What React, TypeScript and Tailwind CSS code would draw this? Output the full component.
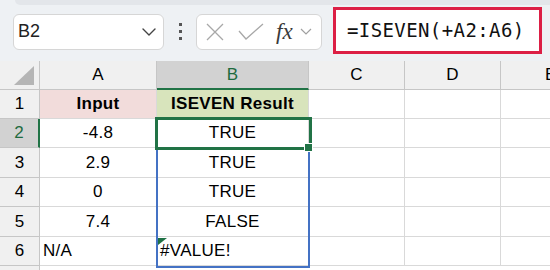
import type { ReactNode } from "react";

const cellFont = { fontFamily: '"Liberation Sans", Arial, sans-serif' };

type Row = { n: number; a: string; b: string; left?: boolean };

const rows: Row[] = [
  { n: 2, a: "-4.8", b: "TRUE" },
  { n: 3, a: "2.9", b: "TRUE" },
  { n: 4, a: "0", b: "TRUE" },
  { n: 5, a: "7.4", b: "FALSE" },
  { n: 6, a: "N/A", b: "#VALUE!", left: true },
];

const rowHeights = ["h-[29px]", "h-[30px]", "h-[29px]", "h-[30px]", "h-[29px]"];

function Cell({ children, className = "" }: { children?: ReactNode; className?: string }) {
  return (
    <div
      className={`flex items-center border-r border-b border-[#d9d9d9] text-[17px] tracking-[0.3px] text-black ${className}`}
    >
      {children}
    </div>
  );
}

function Chevron({ color }: { color: string }) {
  return (
    <svg width="14" height="8" viewBox="0 0 14 8" fill="none" aria-hidden>
      <path d="M1 1l6 6 6-6" stroke={color} strokeWidth="1.4" strokeLinecap="round" strokeLinejoin="round" />
    </svg>
  );
}

function FormulaBar() {
  return (
    <div className="relative flex h-[61px] items-center bg-[#eef1f4] pl-[13px]">
      <div className="absolute left-[15px] right-0 top-0 h-[5px] rounded-bl-[6px] bg-[#e3e6ea]" />
      <div className="mt-[2px] flex h-[36px] w-[151px] items-center justify-between rounded-[6px] border border-[#d6d6d6] bg-white pl-[4px] pr-[7px]">
        <span className="text-[18px] text-[#222]" style={cellFont}>
          B2
        </span>
        <Chevron color="#444" />
      </div>
      <div className="ml-[15px] mr-[14px] mt-[2px] flex flex-col gap-[4px]">
        <span className="size-[3px] bg-[#555]" />
        <span className="size-[3px] bg-[#555]" />
        <span className="size-[3px] bg-[#555]" />
      </div>
      <div className="mt-[2px] flex h-[36px] w-[126px] items-center rounded-[6px] border border-[#d6d6d6] bg-white pl-[9px]">
        <svg width="18" height="18" viewBox="0 0 18 18" fill="none" aria-hidden>
          <path d="M1 1l16 16M17 1L1 17" stroke="#a8a8a8" strokeWidth="1.3" />
        </svg>
        <svg width="26" height="17" viewBox="0 0 26 17" fill="none" aria-hidden className="ml-[14px]">
          <path d="M1 8l7 8L25 1" stroke="#a8a8a8" strokeWidth="1.3" />
        </svg>
        <span
          className="ml-[12px] text-[23px] italic leading-none text-[#3a3a3a]"
          style={{ fontFamily: '"Liberation Serif", "Times New Roman", serif' }}
        >
          fx
        </span>
        <span className="ml-[7px]">
          <svg width="12" height="7" viewBox="0 0 12 7" fill="none" aria-hidden>
            <path d="M1 1l5 5 5-5" stroke="#a0a0a0" strokeWidth="1.2" />
          </svg>
        </span>
      </div>
      <div className="ml-[11px] flex h-[47px] w-[209px] items-center border-[3px] border-[#dc1f45] bg-white pl-[11px]">
        <span
          className="text-[19px] tracking-[0.4px] text-[#111]"
          style={{ fontFamily: '"DejaVu Sans Mono", "Liberation Mono", monospace' }}
        >
          =ISEVEN(+A2:A6)
        </span>
      </div>
    </div>
  );
}

export default function App() {
  return (
    <div className="h-[270px] w-[550px] overflow-hidden bg-white" style={cellFont}>
      <FormulaBar />
      <div className="relative">
        <div className="grid grid-cols-[40px_117px_152px_96px_96px_1fr]">
          {/* column headers */}
          <div className="relative h-[29px] border-r border-b border-[#c6c6c6] bg-[#f0f0f0]">
            <svg width="20" height="19" viewBox="0 0 20 19" className="absolute bottom-[4px] right-[5px]" aria-hidden>
              <path d="M20 0v19H0z" fill="#b5b5b5" />
            </svg>
          </div>
          <div className="flex h-[29px] items-center justify-center border-r border-b border-[#c6c6c6] bg-[#f0f0f0] text-[17px]">
            A
          </div>
          <div className="flex h-[29px] items-center justify-center border-r border-b-[2px] border-r-[#c6c6c6] border-b-[#217346] bg-[#d2d2d2] text-[17px] text-[#1e6b3f]">
            B
          </div>
          <div className="flex h-[29px] items-center justify-center border-r border-b border-[#c6c6c6] bg-[#f0f0f0] text-[17px]">
            C
          </div>
          <div className="flex h-[29px] items-center justify-center border-r border-b border-[#c6c6c6] bg-[#f0f0f0] text-[17px]">
            D
          </div>
          <div className="flex h-[29px] items-center border-b border-[#c6c6c6] bg-[#f0f0f0] pl-[44px] text-[17px]">
            E
          </div>

          {/* row 1 */}
          <div className="flex h-[29px] items-center justify-center border-r border-b border-[#c6c6c6] bg-[#f0f0f0] text-[17px]">
            1
          </div>
          <Cell className="justify-center bg-[#f2dcdb] font-bold">Input</Cell>
          <Cell className="justify-center bg-[#d8e4bc] font-bold">ISEVEN Result</Cell>
          <Cell />
          <Cell />
          <Cell className="border-r-0" />

          {rows.map((r, i) => {
            const sel = r.n === 2;
            return (
              <div key={r.n} className="contents">
                <div
                  className={`flex ${rowHeights[i]} items-center justify-center border-b border-[#c6c6c6] text-[17px] ${
                    sel ? "border-r-[2px] border-r-[#217346] bg-[#d2d2d2] text-[#1e6b3f]" : "border-r border-r-[#c6c6c6] bg-[#f0f0f0]"
                  }`}
                >
                  {r.n}
                </div>
                <Cell className={r.left ? "pl-[3px]" : "justify-center"}>{r.a}</Cell>
                <Cell className={r.left ? "pl-[3px]" : "justify-center"}>{r.b}</Cell>
                <Cell />
                <Cell />
                <Cell className="border-r-0" />
              </div>
            );
          })}
          <div className="h-[10px] border-r border-[#c6c6c6] bg-[#f0f0f0]" />
        </div>

        {/* spill range B3:B6 */}
        <div className="pointer-events-none absolute left-[156px] top-[87px] h-[120px] w-[154px] border-[2px] border-[#4472c4]" />
        {/* active cell B2 */}
        <div className="pointer-events-none absolute left-[155px] top-[56px] h-[33px] w-[157px] border-[3px] border-[#217346]" />
        {/* fill handle */}
        <div className="pointer-events-none absolute left-[304px] top-[82px] size-[9px] border border-white bg-[#217346]" />
        {/* error indicator on B6 */}
        <svg width="9" height="7" viewBox="0 0 9 7" className="absolute left-[158px] top-[177px]" aria-hidden>
          <path d="M0 0h9L0 7z" fill="#1e7145" />
        </svg>
      </div>
    </div>
  );
}
